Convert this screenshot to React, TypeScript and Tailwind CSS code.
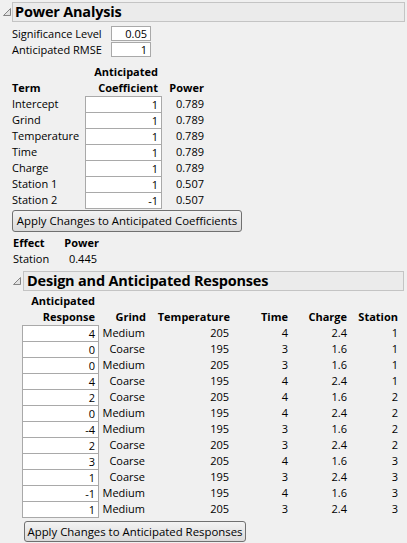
import React from "react";

function Tri({ size = 8 }: { size?: number }) {
  const s = size;
  return (
    <svg width={s} height={s} viewBox={`0 0 ${s} ${s}`} className="shrink-0">
      <path
        d={`M${s - 0.5} 0.5 L${s - 0.5} ${s - 0.5} L0.5 ${s - 0.5} Z`}
        fill="#e2e2e2"
        stroke="#858585"
        strokeWidth="1"
        strokeLinejoin="round"
      />
    </svg>
  );
}

const coeffRows: [string, string, string][] = [
  ["Intercept", "1", "0.789"],
  ["Grind", "1", "0.789"],
  ["Temperature", "1", "0.789"],
  ["Time", "1", "0.789"],
  ["Charge", "1", "0.789"],
  ["Station 1", "1", "0.507"],
  ["Station 2", "-1", "0.507"],
];

const respRows: [string, string, string, string, string, string][] = [
  ["4", "Medium", "205", "4", "2.4", "1"],
  ["0", "Coarse", "195", "3", "1.6", "1"],
  ["0", "Medium", "205", "3", "1.6", "1"],
  ["4", "Coarse", "195", "4", "2.4", "1"],
  ["2", "Coarse", "205", "4", "1.6", "2"],
  ["0", "Medium", "195", "4", "2.4", "2"],
  ["-4", "Medium", "195", "3", "1.6", "2"],
  ["2", "Coarse", "205", "3", "2.4", "2"],
  ["3", "Coarse", "205", "4", "1.6", "3"],
  ["1", "Coarse", "195", "3", "2.4", "3"],
  ["-1", "Medium", "195", "4", "1.6", "3"],
  ["1", "Medium", "205", "3", "2.4", "3"],
];

export default function App() {
  return (
    <div className="w-[407px] h-[543px] overflow-hidden bg-[#f0f0f0] text-black font-['Open_Sans',sans-serif] text-[11px] leading-[16px]">
      {/* Header 1 */}
      <div className="pt-[2px] pl-[3px] flex items-center gap-[1px]">
        <Tri size={8} />
        <div className="w-[393px] h-[20px] border border-[#c4c4c4] bg-[#ebebeb] flex items-center pl-[2px]">
          <span className="font-bold text-[14.5px] leading-[18px] tracking-[-0.2px]">Power Analysis</span>
        </div>
      </div>

      <div className="pl-[12px] pt-[4px]">
        {/* Inputs */}
        <div className="flex h-[16px] items-start">
          <div className="w-[99px]">Significance Level</div>
          <div className="w-[40px] h-[15px] border border-[#a9a9a9] bg-white text-right pr-[3px] leading-[13px]">0.05</div>
        </div>
        <div className="flex h-[16px] items-start">
          <div className="w-[99px]">Anticipated RMSE</div>
          <div className="w-[40px] h-[15px] border border-[#a9a9a9] bg-white text-right pr-[3px] leading-[13px]">1</div>
        </div>

        {/* Coefficient table */}
        <div className="mt-[6px] font-bold">
          <div className="flex h-[16px]">
            <div className="w-[73px]" />
            <div className="w-[77px] text-right pr-[4px]">Anticipated</div>
          </div>
          <div className="flex h-[16px]">
            <div className="w-[73px]">Term</div>
            <div className="w-[77px] text-right pr-[4px]">Coefficient</div>
            <div className="w-[42px] text-right">Power</div>
          </div>
        </div>
        <div>
          {coeffRows.map(([t, c, p], i) => (
            <div key={t} className="flex h-[16px]">
              <div className="w-[73px]">{t}</div>
              <div
                className={`w-[77px] h-[16px] bg-white border-x border-t border-[#a9a9a9] text-right pr-[3px] leading-[15px] ${
                  i === coeffRows.length - 1 ? "h-[17px] border-b" : ""
                }`}
              >
                {c}
              </div>
              <div className="w-[42px] text-right">{p}</div>
            </div>
          ))}
        </div>

        <div className="mt-[2px] w-[230px] h-[22px] rounded-[3px] border border-[#707070] bg-linear-to-b from-[#f3f3f3] to-[#dadada] flex items-center justify-center text-[11.4px]">
          Apply Changes to Anticipated Coefficients
        </div>

        {/* Effect */}
        <div className="mt-[3px] pl-[1px]">
          <div className="flex h-[16px] font-bold">
            <div className="w-[48px]">Effect</div>
            <div className="w-[38px] text-right">Power</div>
          </div>
          <div className="flex h-[16px]">
            <div className="w-[48px]">Station</div>
            <div className="w-[36px] text-right">0.445</div>
          </div>
        </div>
      </div>

      {/* Header 2 */}
      <div className="mt-[4px] pl-[13px] flex items-center gap-[2px]">
        <Tri size={8} />
        <div className="w-[381px] h-[20px] border border-[#c4c4c4] bg-[#ebebeb] flex items-center pl-[3px]">
          <span className="font-bold text-[14.5px] leading-[18px] tracking-[-0.2px]">Design and Anticipated Responses</span>
        </div>
      </div>

      <div className="pl-[22px] mt-[2px]">
        <div className="font-bold">
          <div className="flex h-[16px]">
            <div className="w-[77px] text-right pr-[4px]">Anticipated</div>
          </div>
          <div className="flex h-[16px]">
            <div className="w-[77px] text-right pr-[4px]">Response</div>
            <div className="w-[49px] text-right pr-[2px]">Grind</div>
            <div className="w-[83px] text-right pr-[1px]">Temperature</div>
            <div className="w-[58px] text-right pr-[1px]">Time</div>
            <div className="w-[59px] text-right pr-[1px]">Charge</div>
            <div className="w-[51px] text-right pr-[1px]">Station</div>
          </div>
        </div>
        <div>
          {respRows.map((r, i) => (
            <div key={i} className="flex h-[16px]">
              <div
                className={`w-[77px] h-[16px] bg-white border-x border-t border-[#a9a9a9] text-right pr-[3px] leading-[15px] ${
                  i === respRows.length - 1 ? "h-[17px] border-b" : ""
                }`}
              >
                {r[0]}
              </div>
              <div className="w-[49px] text-right pr-[3px]">{r[1]}</div>
              <div className="w-[83px] text-right pr-[2px]">{r[2]}</div>
              <div className="w-[58px] text-right pr-[1px]">{r[3]}</div>
              <div className="w-[59px] text-right pr-[1px]">{r[4]}</div>
              <div className="w-[51px] text-right pr-[1px]">{r[5]}</div>
            </div>
          ))}
        </div>
        <div className="mt-[4px] ml-[2px] w-[222px] h-[21px] rounded-[3px] border border-[#707070] bg-linear-to-b from-[#f3f3f3] to-[#dadada] flex items-center justify-center text-[11.4px]">
          Apply Changes to Anticipated Responses
        </div>
      </div>
    </div>
  );
}
